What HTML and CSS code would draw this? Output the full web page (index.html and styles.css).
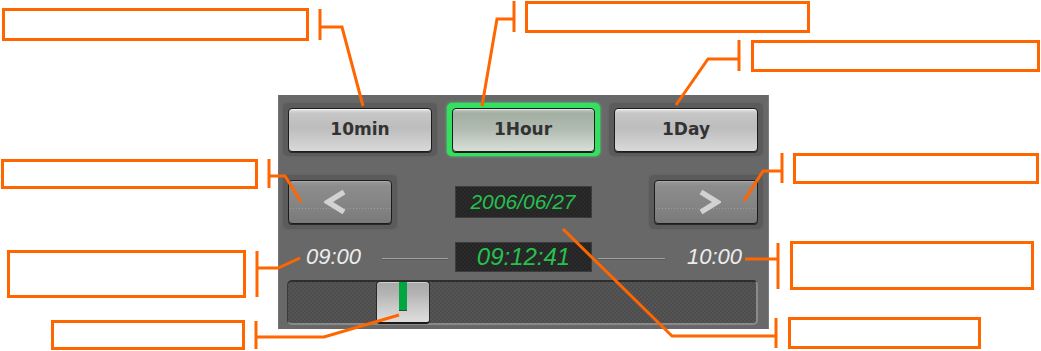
FILE: index.html
```html
<!DOCTYPE html>
<html>
<head>
    <meta charset="utf-8">
    <title>Time range control</title>
    <link rel="stylesheet" href="styles.css">
</head>
<body>
    <div class="stage">
        <div class="panel">
            <div class="row range">
                <div class="well"><button class="btn">10min</button></div>
                <div class="well well-on"><button class="btn btn-on">1Hour</button></div>
                <div class="well"><button class="btn">1Day</button></div>
            </div>
            <div class="row nav">
                <div class="well well-nav">
                    <button class="btn-nav btn-prev">
                        <svg width="22" height="26" viewBox="0 0 22 26"><polyline points="20,3 4,13 20,23" fill="none" stroke="#d2d2d2" stroke-width="5.5" stroke-linejoin="miter"/></svg>
                    </button>
                </div>
                <div class="lcd lcd-date">2006/06/27</div>
                <div class="well well-nav">
                    <button class="btn-nav btn-next">
                        <svg width="22" height="26" viewBox="0 0 22 26"><polyline points="2,3 18,13 2,23" fill="none" stroke="#d2d2d2" stroke-width="5.5" stroke-linejoin="miter"/></svg>
                    </button>
                </div>
            </div>
            <div class="row clock">
                <span class="tick tick-start">09:00</span>
                <span class="rule rule-left"></span>
                <div class="lcd lcd-time">09:12:41</div>
                <span class="rule rule-right"></span>
                <span class="tick tick-end">10:00</span>
            </div>
            <div class="track">
                <div class="thumb"><span class="mark"></span></div>
            </div>
        </div>

        <svg class="leaders" width="1041" height="351" viewBox="0 0 1041 351">
            <g fill="none" stroke="#ff6600" stroke-width="3">
                <line x1="320" y1="9" x2="320" y2="40"/>
                <polyline points="320,27 342,27 363,106"/>
                <line x1="514" y1="1" x2="514" y2="32"/>
                <polyline points="514,19 497,19 482,106"/>
                <line x1="739" y1="40" x2="739" y2="71"/>
                <polyline points="739,59 708,59 676,105"/>
                <line x1="269" y1="159" x2="269" y2="188"/>
                <polyline points="269,176 285,176 301,202"/>
                <line x1="782" y1="153" x2="782" y2="183"/>
                <polyline points="782,171 763,171 744,201"/>
                <line x1="257" y1="251" x2="257" y2="297"/>
                <polyline points="257,268 278,268 300,258"/>
                <line x1="778" y1="243" x2="778" y2="289"/>
                <polyline points="778,259 745,259"/>
                <line x1="256" y1="321" x2="256" y2="349"/>
                <polyline points="256,337 324,337 399,315"/>
                <line x1="776" y1="318" x2="776" y2="348"/>
                <polyline points="776,336 672,336 563,229"/>
            </g>
        </svg>

        <div class="note note-min"></div>
        <div class="note note-hour"></div>
        <div class="note note-day"></div>
        <div class="note note-prev"></div>
        <div class="note note-next"></div>
        <div class="note note-start"></div>
        <div class="note note-end"></div>
        <div class="note note-thumb"></div>
        <div class="note note-now"></div>
    </div>
</body>
</html>
```

FILE: styles.css
```css
html, body {
    margin: 0;
    padding: 0;
    background: #fff;
}

.stage {
    position: relative;
    width: 1041px;
    height: 351px;
    overflow: hidden;
    font-family: "Liberation Sans", Arial, sans-serif;
}

/* control panel */
.panel {
    box-sizing: border-box;
    width: 491px;
    height: 234px;
    margin: 95px 0 0 278px;
    padding: 8px 6px 0 5px;
    background: #686868;
    box-shadow: inset 1px 0 0 #747474, inset -1px 0 0 #7a7a7a;
}

.row {
    display: flex;
    align-items: center;
    justify-content: space-between;
}

.well {
    box-sizing: border-box;
    display: flex;
    padding: 5px 5px 4px 5px;
    border-radius: 5px;
    background: #5b5b5b;
    box-shadow: 0 0 2px #5e5e5e;
}
.range .well {
    width: 154px;
    height: 53px;
}
.range .well-on {
    width: 153px;
    background: #33e060;
    box-shadow: 0 0 3px #4cf07a;
}

.btn {
    flex: 1;
    margin: 0;
    padding: 0 0 3px 0;
    border: 1px solid #1c1c1c;
    border-radius: 4px;
    background: linear-gradient(#e6e6e6 0, #c6c6c6 10%, #bdbdbd 45%, #d9d9d9 100%);
    box-shadow: inset 0 1px 0 #f4f4f4, 0 1px 0 #2a2a2a;
    font-family: "DejaVu Sans", sans-serif;
    font-weight: bold;
    font-size: 17px;
    color: #333;
}
.btn-on {
    background: linear-gradient(#c4ccc4 0, #a3afa3 10%, #b2bcb2 50%, #d8e0d8 100%);
    box-shadow: inset 0 1px 0 #e0e8e0, 0 1px 0 #1a1a1a;
}

.nav {
    margin-top: 19px;
}
.well-nav {
    width: 114px;
    height: 54px;
    padding: 5px;
}
.btn-nav {
    flex: 1;
    display: flex;
    align-items: center;
    margin: 0;
    padding: 0;
    border: 1px solid #1c1c1c;
    border-radius: 4px;
    background:
        radial-gradient(circle, #9a9a9a 0.6px, transparent 1px) 0 25px / 3px 5px repeat-x,
        linear-gradient(#9a9a9a 0, #8c8c8c 12%, #858585 55%, #7a7a7a 100%);
    box-shadow: inset 0 1px 0 #a8a8a8, 0 1px 0 #2a2a2a;
}
.btn-prev {
    justify-content: center;
    padding-right: 10px;
}
.btn-next {
    justify-content: flex-end;
    padding-right: 36px;
}

.lcd {
    box-sizing: border-box;
    display: flex;
    align-items: center;
    justify-content: center;
    background:
        repeating-conic-gradient(#2b2b2b 0 25%, #242424 0 50%) 0 0 / 4px 4px;
    border: 1px solid #3c3c3c;
    color: #26c04e;
    font-style: italic;
}
.lcd-date {
    width: 137px;
    height: 32px;
    font-size: 21px;
}

.clock {
    justify-content: flex-start;
    margin-top: 13px;
    height: 30px;
}
.tick {
    width: 55px;
    color: #ececec;
    font-size: 22px;
    font-style: italic;
    line-height: 30px;
}
.tick-start {
    margin-left: 23px;
}
.tick-end {
    margin-left: 22px;
}
.rule {
    height: 1px;
    margin-top: 2px;
    background: #a0a0a0;
    box-shadow: 0 1px 0 #5a5a5a;
}
.rule-left {
    width: 66px;
    margin-left: 21px;
}
.rule-right {
    width: 67px;
    margin-left: 6px;
}
.lcd-time {
    width: 137px;
    height: 30px;
    margin-left: 7px;
    font-size: 24px;
}

/* slider */
.track {
    box-sizing: border-box;
    display: flex;
    width: 471px;
    height: 45px;
    margin: 8px 0 0 4px;
    border-radius: 5px;
    border-top: 2px solid #2e2e2e;
    border-left: 1px solid #3a3a3a;
    border-right: 2px solid #8a8a8a;
    border-bottom: 2px solid #8a8a8a;
    background:
        repeating-conic-gradient(#555 0 25%, #4d4d4d 0 50%) 0 0 / 4px 4px;
}
.thumb {
    box-sizing: border-box;
    width: 54px;
    height: 43px;
    margin: -1px 0 0 88px;
    border-radius: 4px;
    border: 1px solid #2a2a2a;
    border-bottom: 2px solid #1a1a1a;
    background: linear-gradient(#a8a8a8 0, #b4b4b4 30%, #c8c8c8 60%, #dedede 100%);
    box-shadow: inset 0 1px 0 #d0d0d0;
}
.mark {
    display: block;
    width: 8px;
    height: 28px;
    margin-left: 22px;
    background: #00a640;
    box-shadow: 0 1px 0 #2f4f2f;
}

/* callouts */
.leaders {
    position: absolute;
    left: 0;
    top: 0;
}
.note {
    position: absolute;
    box-sizing: border-box;
    border: 3px solid #ff6600;
    background: #fff;
}
.note-min   { left: 2px;   top: 8px;   width: 307px; height: 33px; }
.note-hour  { left: 525px; top: 1px;   width: 285px; height: 32px; }
.note-day   { left: 751px; top: 40px;  width: 289px; height: 32px; }
.note-prev  { left: 1px;   top: 159px; width: 257px; height: 30px; }
.note-next  { left: 793px; top: 153px; width: 246px; height: 31px; }
.note-start { left: 7px;   top: 250px; width: 239px; height: 48px; }
.note-end   { left: 790px; top: 241px; width: 244px; height: 49px; }
.note-thumb { left: 51px;  top: 320px; width: 194px; height: 30px; }
.note-now   { left: 788px; top: 317px; width: 193px; height: 32px; }
```
